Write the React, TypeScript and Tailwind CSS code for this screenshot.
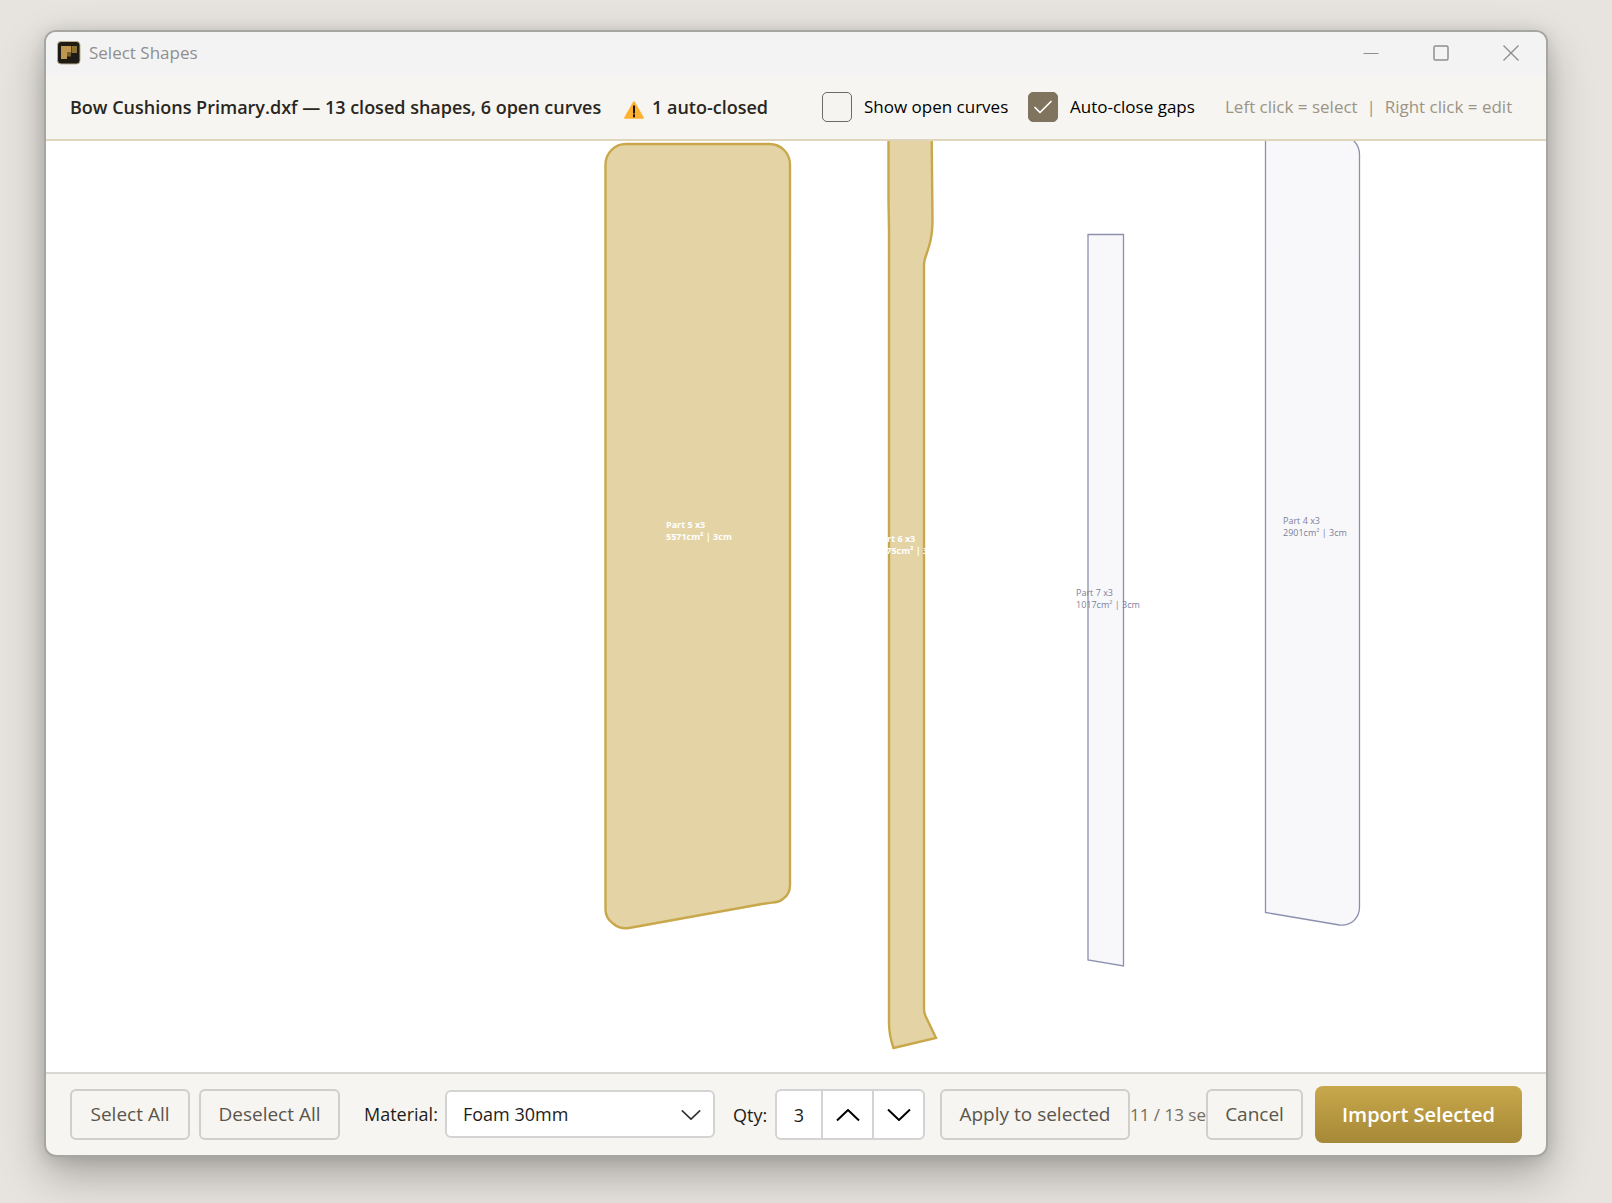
import { useState } from 'react';

type Part = {
  id: number;
  path: string;
  area: string;
  x: number;
  y: number;
};

const PARTS: Part[] = [
  {
    id: 5,
    path: 'M580.5 3 H723.5 A20.5 20.5 0 0 1 744 23.5 V744 Q744 753 737.5 757.5 Q733 761.5 726 761.6 L716 763 L583 787 Q574 788.5 567 782.5 Q559.5 777 559.5 768.5 V23.5 A20.5 20.5 0 0 1 580.5 3 Z',
    area: '5571cm²',
    x: 620,
    y: 387,
  },
  {
    id: 6,
    path: 'M842.5 -20 V60 L843 90 V882 Q843 894 847.5 907 L890 897 L879.5 875 Q878 872 878 868 V124 Q878 120 880.5 113 C884 103 886.5 95 886.5 78 L885.5 -20 Z',
    area: '1375cm²',
    x: 830,
    y: 401,
  },
  { id: 7, path: 'M1042 93.5 H1077.5 V825 L1042 819 Z', area: '1017cm²', x: 1030, y: 455 },
  {
    id: 4,
    path: 'M1219.5 -6 H1294 A19.5 19.5 0 0 1 1313.5 13.5 V766 Q1313.5 774 1308 779.5 Q1302 785 1293.5 784 L1219.5 771.5 Z',
    area: '2901cm²',
    x: 1237,
    y: 383,
  },
];

const outlineButton =
  'h-[51px] shrink-0 rounded-md border-2 border-[#d0cfcb] bg-[#f6f5f1] text-[19px] text-[#5b554b] whitespace-nowrap';

function AppIcon() {
  return (
    <svg width="24" height="24" viewBox="0 0 24 24" aria-hidden="true">
      <rect x="0.5" y="0.5" width="22.5" height="22.5" rx="3.5" fill="#1e1b15" stroke="#b9ad8e" />
      <path d="M4 5h10v6h-4v7H4z" fill="#bf9750" />
      <path d="M14.5 5H20v7h-5.5z" fill="#8b7233" />
      <path d="M10 11h4v4.500h-4z" fill="#786330" />
    </svg>
  );
}

function WarningIcon() {
  return (
    <svg width="20" height="18" viewBox="0 0 20 18" className="mt-1.5" aria-label="Warning">
      <path d="M9.200 0.700Q10 -0.300 10.800 0.700L19.800 16.400Q20.200 17.600 19 17.700H1Q-0.200 17.600 0.200 16.400Z" fill="#ffb02e" />
      <path d="M10 5.300v6.400M10 13.900v1.600" stroke="#1a1206" strokeWidth="2" strokeLinecap="round" />
    </svg>
  );
}

function Chevron({ up = false, width = 24, stroke = 2 }: { up?: boolean; width?: number; stroke?: number }) {
  return (
    <svg
      width={width}
      height={width / 2}
      viewBox="0 0 24 12"
      fill="none"
      stroke="currentColor"
      strokeWidth={stroke}
      aria-hidden="true"
    >
      <path d={up ? 'M1 11.500L12 1L23 11.500' : 'M1 0.500L12 11L23 0.500'} />
    </svg>
  );
}

type CheckOptionProps = {
  label: string;
  checked: boolean;
  onChange: () => void;
  className: string;
};

function CheckOption({ label, checked, onChange, className }: CheckOptionProps) {
  return (
    <label className={`flex shrink-0 items-center gap-3 text-[17px] whitespace-nowrap text-black ${className}`}>
      <span className="relative flex size-[30px]">
        <input
          type="checkbox"
          checked={checked}
          onChange={onChange}
          className="size-[30px] appearance-none rounded-[5px] border-[1.5px] border-[#6b6a68] bg-[#f5f4f1] checked:border-[#80745f] checked:bg-[#80745f]"
        />
        {checked && (
          <svg
            viewBox="0 0 30 30"
            className="pointer-events-none absolute inset-0"
            fill="none"
            stroke="#fff"
            strokeWidth="1.700"
            strokeLinecap="round"
            strokeLinejoin="round"
          >
            <path d="M7 15.500L12 20.500L23 9.500" />
          </svg>
        )}
      </span>
      {label}
    </label>
  );
}

function ShapeCanvas() {
  const [selected, setSelected] = useState([5, 6]);

  const toggle = (id: number) =>
    setSelected((ids) => (ids.includes(id) ? ids.filter((i) => i !== id) : [...ids, id]));

  return (
    <div className="relative min-h-[400px] flex-1 overflow-hidden bg-white">
      <svg
        viewBox="0 0 1500 931"
        preserveAspectRatio="xMidYMid slice"
        className="absolute inset-0 size-full"
      >
        {PARTS.map((part) => {
          const on = selected.includes(part.id);
          return (
            <g key={part.id} onClick={() => toggle(part.id)}>
              <path
                d={part.path}
                fill={on ? '#e4d3a5' : '#f8f8fb'}
                stroke={on ? '#c8a84b' : '#8c90ae'}
                strokeWidth={on ? 2.4 : 1.3}
              />
              <text
                x={part.x}
                y={part.y}
                fill={on ? '#ffffff' : '#7d8198'}
                className={on ? 'text-[9px] font-bold' : 'text-[9px]'}
              >
                <tspan>Part {part.id} x3</tspan>
                <tspan x={part.x} dy="12">
                  {part.area} | 3cm
                </tspan>
              </text>
            </g>
          );
        })}
      </svg>
    </div>
  );
}

export default function App() {
  const [showOpen, setShowOpen] = useState(false);
  const [autoClose, setAutoClose] = useState(true);
  const [qty, setQty] = useState(3);

  return (
    <div className="flex min-h-screen bg-[#e7e4df] pt-[30px] pr-16 pb-[46px] pl-11 font-['Open_Sans','Noto_Sans',sans-serif]">
      <div className="flex min-w-0 flex-1 flex-col overflow-hidden rounded-xl border-2 border-[#a6a6a2] bg-[#f6f5f1] shadow-[0_18px_44px_rgba(0,0,0,0.28),0_2px_16px_rgba(0,0,0,0.12)]">
        {/* Title bar */}
        <header className="flex h-[43px] shrink-0 items-center bg-[#f3f3f3] pb-0.5 pl-[11px] text-[#8f8f8f]">
          <AppIcon />
          <h1 className="ml-2 flex-1 text-[17px]">Select Shapes</h1>
          <button type="button" aria-label="Minimize" className="flex h-full w-[70px] items-center justify-center">
            <svg width="16" height="16" viewBox="0 0 16 16" stroke="currentColor">
              <path d="M0.500 8.500h15" />
            </svg>
          </button>
          <button type="button" aria-label="Maximize" className="flex h-full w-[70px] items-center justify-center">
            <svg width="16" height="16" viewBox="0 0 16 16" fill="none" stroke="currentColor" strokeWidth="1.500">
              <rect x="1" y="1" width="14" height="14" rx="1.500" />
            </svg>
          </button>
          <button type="button" aria-label="Close" className="flex h-full w-[70px] items-center justify-center">
            <svg width="16" height="16" viewBox="0 0 16 16" stroke="currentColor" strokeWidth="1.400">
              <path d="M0.500 0.500l15 15M15.500 0.500l-15 15" />
            </svg>
          </button>
        </header>

        {/* File summary and view options */}
        <div className="flex h-[66px] shrink-0 items-center border-b-2 border-[#dfd5bb] px-6">
          <h2 className="flex flex-1 items-center text-lg font-semibold whitespace-nowrap text-[#2a2620]">
            <span className="w-[554px]">Bow Cushions Primary.dxf — 13 closed shapes, 6 open curves</span>
            <span className="flex items-center gap-2">
              <WarningIcon />1 auto-closed
            </span>
          </h2>
          <div className="flex items-center gap-[19px]">
            <CheckOption
              label="Show open curves"
              checked={showOpen}
              onChange={() => setShowOpen(!showOpen)}
              className="w-[187px]"
            />
            <CheckOption
              label="Auto-close gaps"
              checked={autoClose}
              onChange={() => setAutoClose(!autoClose)}
              className="w-[171px]"
            />
          </div>
          <p className="ml-[26px] w-[297px] shrink-0 text-[17px] whitespace-pre text-[#9c9486]">
            Left click = select  |  Right click = edit
          </p>
        </div>

        <ShapeCanvas />

        {/* Actions */}
        <footer className="flex h-[83px] shrink-0 items-center border-t-2 border-[#dad8d3] px-6">
          <button type="button" className={`${outlineButton} w-[120px]`}>
            Select All
          </button>
          <button type="button" className={`${outlineButton} ml-[9px] w-[141px]`}>
            Deselect All
          </button>

          <div className="ml-6 flex items-center pb-0.5">
            <label htmlFor="material" className="w-[81px] text-lg text-[#1f1c18]">
              Material:
            </label>
            <div className="relative w-[270px]">
              <select
                id="material"
                className="h-12 w-full appearance-none rounded-md border-2 border-[#d3d3d3] bg-white pl-4 text-lg text-[#1f1c18]"
              >
                <option>Foam 30mm</option>
              </select>
              <span className="pointer-events-none absolute top-5 right-3.5 text-[#333]">
                <Chevron width={20} />
              </span>
            </div>
          </div>

          <label htmlFor="qty" className="ml-[18px] w-[42px] text-lg text-[#1f1c18]">
            Qty:
          </label>
          <div className="flex h-[51px] w-[150px] shrink-0 divide-x-2 divide-[#d3d3d3] overflow-hidden rounded-md border-2 border-[#d3d3d3] bg-white text-black">
            <input
              id="qty"
              inputMode="numeric"
              value={qty}
              onChange={(e) => setQty(Number(e.target.value) || 0)}
              className="w-[46px] text-center text-lg text-[#1f1c18]"
            />
            <button
              type="button"
              aria-label="Increase quantity"
              onClick={() => setQty(qty + 1)}
              className="flex flex-1 items-center justify-center"
            >
              <Chevron up />
            </button>
            <button
              type="button"
              aria-label="Decrease quantity"
              onClick={() => setQty(qty - 1)}
              className="flex flex-1 items-center justify-center"
            >
              <Chevron />
            </button>
          </div>

          <button type="button" className={`${outlineButton} ml-[15px] w-[190px]`}>
            Apply to selected
          </button>
          <span className="min-w-0 flex-1 overflow-hidden text-[17px] whitespace-nowrap text-[#756d60]">
            11 / 13 selected
          </span>
          <button type="button" className={`${outlineButton} w-[97px]`}>
            Cancel
          </button>
          <button
            type="button"
            className="ml-3 h-[57px] w-[207px] shrink-0 rounded-lg bg-linear-to-b from-[#c8a84b] to-[#a68937] text-xl font-semibold whitespace-nowrap text-white"
          >
            Import Selected
          </button>
        </footer>
      </div>
    </div>
  );
}
